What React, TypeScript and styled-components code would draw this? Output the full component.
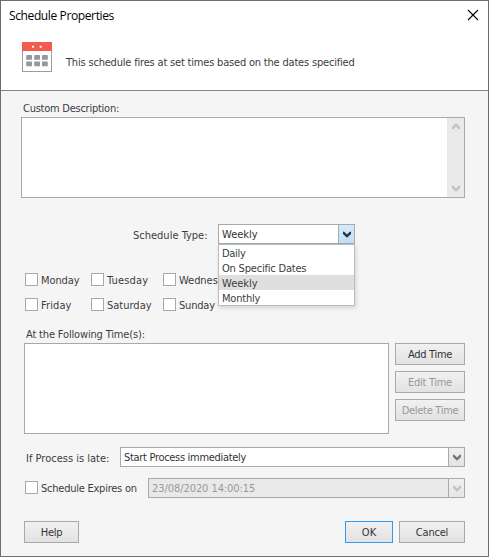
import React from "react";
import styled, { createGlobalStyle, css } from "styled-components";

const GlobalStyle = createGlobalStyle`
  * { box-sizing: border-box; }
  body { margin: 0; background: #fff; }
  button, ul { margin: 0; padding: 0; }
`;

const Dialog = styled.div`
  width: 489px;
  height: 557px;
  display: flex;
  flex-direction: column;
  border: 1px solid #6e6d6e;
  background: #f5f5f5;
  color: #3c3c41;
  font: 11px/13px "DejaVu Sans Condensed", "DejaVu Sans", sans-serif;
  white-space: nowrap;
  overflow: hidden;
`;

const Header = styled.header`
  height: 90px;
  flex: none;
  background: #fff;
  border-bottom: 1px solid #828282;
`;

const TitleBar = styled.div`
  height: 30px;
  display: flex;
  justify-content: space-between;
  padding: 7px 9px 0 8px;
`;

const Title = styled.h1`
  margin: 0;
  color: #000;
  font: 400 12px/16px "Open Sans", sans-serif;
  letter-spacing: -0.38px;
`;

const CloseButton = styled.button`
  width: 12px;
  height: 12px;
  margin-top: 1px;
  border: 0;
  background: none;
  svg { display: block; }
`;

const Summary = styled.div`
  display: flex;
  align-items: flex-start;
  gap: 13px;
  padding: 10px 0 0 21px;
  svg { flex: none; }
`;

const Text = styled.span<{ $track?: number }>`
  letter-spacing: ${(p) => p.$track ?? 0}px;
`;

const SummaryText = styled(Text)`
  margin-top: 15px;
`;

const Body = styled.main`
  flex: 1;
  display: flex;
  flex-direction: column;
  padding: 11px 23px 13px 23px;
`;

const DescriptionField = styled.section`
  display: flex;
  flex-direction: column;
  gap: 2px;
  margin-left: -3px;
  > span { margin-left: 2px; }
`;

const TextArea = styled.div`
  height: 81px;
  display: flex;
  justify-content: flex-end;
  border: 1px solid #a9a9a9;
  background: #fff;
`;

const ScrollTrack = styled.div`
  width: 17px;
  display: flex;
  flex-direction: column;
  justify-content: space-between;
  align-items: center;
  padding: 5px 0;
  background: #e9e9e9;
  color: #c0c0c0;
`;

const TypeRow = styled.div`
  display: flex;
  align-items: center;
  justify-content: space-between;
  width: 222px;
  margin: 26px 0 0 109px;
`;

const TypeLabel = styled(Text)`
  padding-top: 2px;
`;

const Anchor = styled.div`
  position: relative;
  width: 137px;
`;

const ComboBox = styled.div<{ $disabled?: boolean }>`
  flex: 1;
  height: 20px;
  display: flex;
  justify-content: space-between;
  border: 1px solid #a9a9a9;
  background: ${(p) => (p.$disabled ? "#e9e9e9" : "#fff")};
  color: ${(p) => (p.$disabled ? "#98989b" : "#333337")};
`;

const ComboValue = styled(Text)`
  padding: 3px 0 0 3px;
`;

const arrowTones = {
  open: css`background: linear-gradient(#d5eafd, #bddffc); color: #2f3036;`,
  idle: css`background: linear-gradient(#f0f0f0, #e3e3e3); color: #737373;`,
  disabled: css`background: linear-gradient(#f0f0f0, #e6e6e6); color: #c2c2c2;`,
};

const ArrowButton = styled.span<{ $tone: keyof typeof arrowTones }>`
  width: 16px;
  display: flex;
  align-items: center;
  justify-content: center;
  border-left: 1px solid #a9a9a9;
  ${(p) => arrowTones[p.$tone]}
`;

const Menu = styled.ul`
  position: absolute;
  z-index: 1;
  top: 20px;
  left: 0;
  width: 137px;
  list-style: none;
  border: 1px solid #bcbcbc;
  background: #fff;
  box-shadow: 1px 2px 4px rgba(0, 0, 0, 0.14);
`;

const MenuItem = styled.li<{ $selected?: boolean }>`
  height: 15px;
  padding: 2px 0 0 3px;
  background: ${(p) => (p.$selected ? "#dfdfdf" : "#fff")};
`;

const DayGrid = styled.div`
  display: grid;
  grid-template-columns: 66px 72px 55px;
  grid-auto-rows: 14px;
  row-gap: 11px;
  margin: 29px 0 0 1px;
`;

const CheckLabel = styled.label`
  display: flex;
  align-items: flex-start;
  gap: 3px;
  height: 14px;
  overflow: hidden;
  > span:last-child { padding-top: 1px; }
`;

const CheckBox = styled.span`
  width: 13px;
  height: 13px;
  flex: none;
  border: 1px solid #a9a9a9;
  background: #fff;
`;

const TimesLabel = styled(Text)`
  margin: 16px 0 2px 2px;
`;

const TimesRow = styled.section`
  display: flex;
  justify-content: space-between;
  height: 91px;
`;

const TimeList = styled.div`
  width: 365px;
  border: 1px solid #a9a9a9;
  background: #fff;
`;

const ButtonStack = styled.div`
  display: flex;
  flex-direction: column;
  gap: 6px;
`;

const Button = styled.button<{ $width: number; $primary?: boolean; $track?: number }>`
  width: ${(p) => p.$width}px;
  height: 22px;
  border: 1px solid ${(p) => (p.$primary ? "#3399f5" : "#a9a9a9")};
  background: linear-gradient(#f1f1f1, #e2e2e2);
  color: #333337;
  font: inherit;
  letter-spacing: ${(p) => p.$track ?? 0}px;
  &:disabled { color: #98989b; }
`;

const LateRow = styled.div`
  display: flex;
  align-items: center;
  margin: 13px 0 0 2px;
`;

const LateLabel = styled(Text)`
  width: 94px;
  padding-top: 2px;
`;

const ExpiryRow = styled.div`
  display: flex;
  align-items: flex-start;
  margin: 11px 0 0 1px;
`;

const ExpiryCheck = styled(CheckLabel)`
  width: 123px;
  height: 17px;
  padding-top: 3px;
`;

const Footer = styled.footer`
  display: flex;
  gap: 6px;
  margin-top: auto;
  > :first-child { margin-right: auto; }
`;

function Chevron({ up = false }: { up?: boolean }) {
  return (
    <svg width="8" height="7" viewBox="0 0 8 7" fill="currentColor">
      <path
        transform={up ? "matrix(1 0 0 -1 0 7)" : undefined}
        d="M0 .4 1.5 1 4 3.4 6.5 1 8 .4V3L4 6.8 0 3Z"
      />
    </svg>
  );
}

function CalendarIcon() {
  return (
    <svg width="31" height="32" viewBox="0 0 31 32">
      <rect x=".5" y="1.5" width="29" height="29" fill="#fff" stroke="#9c9c9f" />
      <path d="M0 1h30v9H0z" fill="#f45b4f" />
      <path d="M10 4.7h2v2h-2zM17.7 4.7h2v2h-2z" fill="#fff" />
      <g fill="#98989b">
        {[14, 20.5].map((y) =>
          [4.2, 12.2, 20].map((x) => (
            <rect key={`${x}-${y}`} x={x} y={y} width="5.8" height="4.8" rx=".4" />
          ))
        )}
      </g>
    </svg>
  );
}

const days: [string, number][] = [
  ["Monday", -0.1], ["Tuesday", 0.15], ["Wednesday", -0.05],
  ["Friday", 0.1], ["Saturday", 0], ["Sunday", -0.2],
];

const scheduleTypes: [string, number][] = [
  ["Daily", -0.3], ["On Specific Dates", -0.2], ["Weekly", 0], ["Monthly", -0.2],
];

export default function App() {
  return (
    <>
      <GlobalStyle />
      <Dialog>
        <Header>
          <TitleBar>
            <Title>Schedule Properties</Title>
            <CloseButton aria-label="Close">
              <svg width="12" height="12" viewBox="0 0 12 12" stroke="#000" strokeWidth="1.1">
                <path d="m1 1 10 10M11 1 1 11" />
              </svg>
            </CloseButton>
          </TitleBar>
          <Summary>
            <CalendarIcon />
            <SummaryText $track={-0.19}>
              This schedule fires at set times based on the dates specified
            </SummaryText>
          </Summary>
        </Header>
        <Body>
          <DescriptionField>
            <Text $track={-0.25}>Custom Description:</Text>
            <TextArea>
              <ScrollTrack>
                <Chevron up />
                <Chevron />
              </ScrollTrack>
            </TextArea>
          </DescriptionField>

          <TypeRow>
            <TypeLabel>Schedule Type:</TypeLabel>
            <Anchor>
              <ComboBox>
                <ComboValue>Weekly</ComboValue>
                <ArrowButton $tone="open"><Chevron /></ArrowButton>
              </ComboBox>
              <Menu>
                {scheduleTypes.map(([name, track]) => (
                  <MenuItem key={name} $selected={name === "Weekly"}>
                    <Text $track={track}>{name}</Text>
                  </MenuItem>
                ))}
              </Menu>
            </Anchor>
          </TypeRow>

          <DayGrid>
            {days.map(([name, track]) => (
              <CheckLabel key={name}>
                <CheckBox />
                <Text $track={track}>{name}</Text>
              </CheckLabel>
            ))}
          </DayGrid>

          <TimesLabel $track={-0.16}>At the Following Time(s):</TimesLabel>
          <TimesRow>
            <TimeList />
            <ButtonStack>
              <Button $width={70} $track={-0.3}>Add Time</Button>
              <Button $width={70} $track={-0.3} disabled>Edit Time</Button>
              <Button $width={70} $track={-0.3} disabled>Delete Time</Button>
            </ButtonStack>
          </TimesRow>

          <LateRow>
            <LateLabel>If Process is late:</LateLabel>
            <ComboBox>
              <ComboValue $track={-0.31}>Start Process immediately</ComboValue>
              <ArrowButton $tone="idle"><Chevron /></ArrowButton>
            </ComboBox>
          </LateRow>

          <ExpiryRow>
            <ExpiryCheck>
              <CheckBox />
              <Text $track={-0.24}>Schedule Expires on</Text>
            </ExpiryCheck>
            <ComboBox $disabled>
              <ComboValue $track={-0.07}>23/08/2020 14:00:15</ComboValue>
              <ArrowButton $tone="disabled"><Chevron /></ArrowButton>
            </ComboBox>
          </ExpiryRow>

          <Footer>
            <Button $width={55} $track={-0.3}>Help</Button>
            <Button $width={48} $primary>OK</Button>
            <Button $width={66} $track={-0.2}>Cancel</Button>
          </Footer>
        </Body>
      </Dialog>
    </>
  );
}
